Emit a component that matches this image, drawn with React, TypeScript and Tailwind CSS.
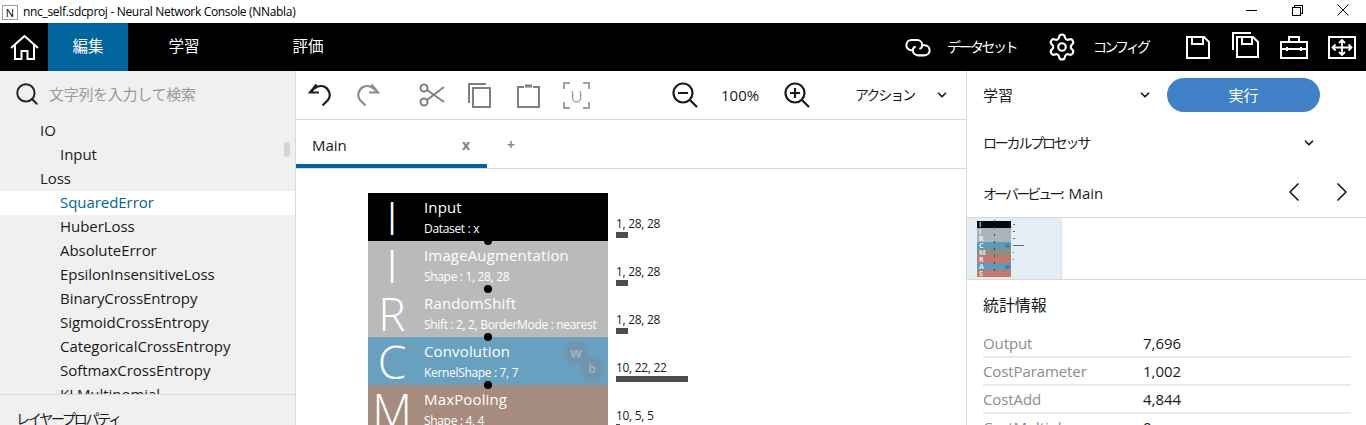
import { ChevronDown, ChevronLeft, ChevronRight, Search, Settings } from "lucide-react";

const FONT = "font-['Open_Sans','Noto_Sans_CJK_JP',sans-serif]";

const treeItems = [
  { label: "IO", depth: 0 },
  { label: "Input", depth: 1 },
  { label: "Loss", depth: 0 },
  { label: "SquaredError", depth: 1, active: true },
  { label: "HuberLoss", depth: 1 },
  { label: "AbsoluteError", depth: 1 },
  { label: "EpsilonInsensitiveLoss", depth: 1 },
  { label: "BinaryCrossEntropy", depth: 1 },
  { label: "SigmoidCrossEntropy", depth: 1 },
  { label: "CategoricalCrossEntropy", depth: 1 },
  { label: "SoftmaxCrossEntropy", depth: 1 },
  { label: "KLMultinomial", depth: 1 },
];

const layers = [
  { letter: "I", name: "Input", sub: "Dataset : x", bg: "bg-black", shape: "1, 28, 28", bar: "w-3" },
  { letter: "I", name: "ImageAugmentation", sub: "Shape : 1, 28, 28", bg: "bg-[#bababa]", shape: "1, 28, 28", bar: "w-3" },
  { letter: "R", name: "RandomShift", sub: "Shift : 2, 2, BorderMode : nearest", bg: "bg-[#bababa]", shape: "1, 28, 28", bar: "w-3" },
  { letter: "C", name: "Convolution", sub: "KernelShape : 7, 7", bg: "bg-[#68a0bf]", shape: "10, 22, 22", bar: "w-[72px]", weights: true },
  { letter: "M", name: "MaxPooling", sub: "Shape : 4, 4", bg: "bg-[#a58c7e]", shape: "10, 5, 5", bar: "w-1" },
];

const thumbRows = [
  { letter: "I", bg: "bg-[#05090d]", bar: "w-[2px]" },
  { letter: "I", bg: "bg-[#abb4bb]", bar: "w-[2px]" },
  { letter: "R", bg: "bg-[#abb4bb]", bar: "w-[2px]" },
  { letter: "C", bg: "bg-[#5b9cbd]", bar: "w-[11px]", weights: true },
  { letter: "M", bg: "bg-[#948a80]", bar: "w-px" },
  { letter: "R", bg: "bg-[#c6766b]", bar: "w-px" },
  { letter: "A", bg: "bg-[#5b9cbd]", bar: "w-0", weights: true },
  { letter: "S", bg: "bg-[#c6766b]", bar: "w-0" },
];

const stats = [
  { label: "Output", value: "7,696" },
  { label: "CostParameter", value: "1,002" },
  { label: "CostAdd", value: "4,844" },
  { label: "CostMultiply", value: "0" },
];

function HomeIcon() {
  return (
    <svg width="29" height="25" viewBox="0 0 29 25" fill="none" stroke="white" strokeWidth="2">
      <path d="M1 13 14.500 1 28 13M5 10v14h6.500v-8h6v8H24V10" />
    </svg>
  );
}

function LinkIcon() {
  return (
    <svg width="26" height="19" viewBox="0 0 28 20" fill="none" stroke="white" strokeWidth="2.200">
      <path d="M9 13H7A5.500 5.500 0 0 1 7 2h6a5.500 5.500 0 0 1 5.500 5.500c0 2-1.500 3.500-3 4" />
      <path d="M18.500 7.500H21a5.500 5.500 0 0 1 0 11h-7A5.500 5.500 0 0 1 8.500 13c0-2 1.500-3.500 3-4" />
    </svg>
  );
}

function SaveIcon() {
  return (
    <svg width="24" height="23" viewBox="0 0 24 23" fill="none" stroke="white" strokeWidth="2">
      <path d="M1 1h17l5 5v16H1z" />
      <path d="M6 1v7h11V1" />
    </svg>
  );
}

function SaveAsIcon() {
  return (
    <svg width="27" height="26" viewBox="0 0 27 26" fill="none" stroke="white" strokeWidth="2">
      <path d="M1 18V1h18" />
      <path d="M5 5h16l5 5v15H5z" />
      <path d="M10 5v7h10V5" />
    </svg>
  );
}

function ToolboxIcon() {
  return (
    <svg width="28" height="24" viewBox="0 0 28 24" fill="none" stroke="white" strokeWidth="2">
      <path d="M1 7h26v16H1zM9 7V2h10v5M1 14h26" />
      <path d="M7 12v4M21 12v4" />
    </svg>
  );
}

function FitIcon() {
  return (
    <svg width="28" height="23" viewBox="0 0 28 23" fill="none" stroke="white" strokeWidth="1.800">
      <path d="M1 1h26v21H1z" strokeWidth="2" />
      <path d="M5 11.500h18M14 4v15M7.500 8.500l-3 3 3 3M20.500 8.500l3 3-3 3M11 7l3-3 3 3M11 16l3 3 3-3" />
    </svg>
  );
}

function UndoIcon({ stroke, flip }: { stroke: string; flip?: boolean }) {
  return (
    <svg width="24" height="24" viewBox="0 0 24 24" fill="none" stroke={stroke} strokeWidth="2.200" className={flip ? "-scale-x-100" : ""}>
      <path d="M8.500 1.500 2 9.500h9M3 9.500C6 4 12 1.500 17 4c5 3 6 9 3 13l-5.500 5.500" />
    </svg>
  );
}

function ScissorsIcon() {
  return (
    <svg width="26" height="24" viewBox="0 0 26 24" fill="none" stroke="#808080" strokeWidth="2">
      <circle cx="5" cy="5" r="3.500" />
      <circle cx="5" cy="19" r="3.500" />
      <path d="M8 7 25 19M8 17 25 4" />
    </svg>
  );
}

function CopyIcon() {
  return (
    <svg width="23" height="25" viewBox="0 0 23 25" fill="none" stroke="#808080" strokeWidth="2">
      <path d="M1 20V1h17" />
      <path d="M5 5h17v19H5z" />
    </svg>
  );
}

function PasteIcon() {
  return (
    <svg width="23" height="25" viewBox="0 0 23 25" fill="none" stroke="#808080" strokeWidth="2">
      <path d="M7 4H1v20h21V4h-6" />
      <path d="M8 1.500h7v3H8z" fill="#808080" stroke="none" />
    </svg>
  );
}

function UngroupIcon() {
  return (
    <svg width="27" height="27" viewBox="0 0 27 27" fill="none" stroke="#a0a0a0" strokeWidth="2">
      <path d="M7 1H1v6M20 1h6v6M7 26H1v-6M20 26h6v-6" />
      <path d="M9.500 9v7a4 4 0 0 0 8 0V9" strokeWidth="1.400" />
    </svg>
  );
}

function ZoomIcon({ plus }: { plus?: boolean }) {
  return (
    <svg width="26" height="26" viewBox="0 0 26 26" fill="none" stroke="#1a1a1a" strokeWidth="2.200">
      <circle cx="11" cy="11" r="9.500" />
      <path d="m18 18 7 7M6 11h10" />
      {plus && <path d="M11 6v10" />}
    </svg>
  );
}

function WindowButtons() {
  return (
    <div className="ml-auto flex items-center pb-[3px]">
      <div className="flex w-[46px] justify-center">
        <svg width="11" height="11" viewBox="0 0 11 11" stroke="black" shapeRendering="crispEdges"><path d="M0 5.500h11" /></svg>
      </div>
      <div className="flex w-[46px] justify-center">
        <svg width="11" height="11" viewBox="0 0 11 11" fill="none" stroke="black" shapeRendering="crispEdges"><path d="M.5 2.500h8v8h-8zM2.500 2.500v-2h8v8h-2" /></svg>
      </div>
      <div className="flex w-[46px] justify-center">
        <svg width="12" height="12" viewBox="0 0 12 12" stroke="black" strokeWidth="1"><path d="m.5.500 11 11M11.500.500l-11 11" /></svg>
      </div>
    </div>
  );
}

function TitleBar() {
  return (
    <div className="flex h-[23px] items-center bg-white">
      <div className="ml-[2px] mt-[2px] flex h-[15px] w-4 items-center justify-center border border-[#9a9a9a] text-[11px] leading-none text-black">N</div>
      <span className="ml-[5px] mt-[1px] text-xs tracking-[-0.32px] text-black">nnc_self.sdcproj - Neural Network Console (NNabla)</span>
      <WindowButtons />
    </div>
  );
}

function NavBar() {
  return (
    <div className="flex h-12 items-center bg-black text-white">
      <div className="flex w-12 justify-center"><HomeIcon /></div>
      <div className="flex h-12 w-20 items-center justify-center bg-[#00659c] text-[15.5px]">編集</div>
      <div className="flex w-[112px] justify-center text-[15.5px]">学習</div>
      <div className="flex w-[136px] justify-center text-[15.5px]">評価</div>
      <div className="ml-auto flex items-center">
        <LinkIcon />
        <span className="ml-[16px] w-[75px] whitespace-nowrap text-sm tracking-[-2.500px]">データセット</span>
        <Settings size={30} strokeWidth={1.700} className="ml-[25px]" />
        <span className="ml-[16px] w-[73px] whitespace-nowrap text-sm tracking-[-2.800px]">コンフィグ</span>
        <span className="ml-[20px]"><SaveIcon /></span>
        <span className="ml-[22px] -mt-1"><SaveAsIcon /></span>
        <span className="ml-[21px]"><ToolboxIcon /></span>
        <span className="ml-[20px] mr-[10px]"><FitIcon /></span>
      </div>
    </div>
  );
}

function Sidebar() {
  return (
    <div className="flex w-[296px] shrink-0 flex-col border-r border-[#d9d9d9] bg-[#f0f0f0]">
      <div className="flex h-12 shrink-0 items-center pb-[2px] pl-[14px] text-[15px] text-[#999999]">
        <Search size={26} strokeWidth={1.800} className="text-[#222222]" />
        <span className="ml-[9px] tracking-[-0.3px]">文字列を入力して検索</span>
      </div>
      <div className="relative h-[275px] shrink-0 overflow-hidden">
        {treeItems.map((item) => (
          <div
            key={item.label}
            className={`flex h-6 items-center pb-[2px] text-[15px] tracking-[-0.05px] ${item.depth ? "pl-[60px]" : "pl-10"} ${
              item.active ? "bg-white text-[#00659c]" : "text-[#1a1a1a]"
            }`}
          >
            {item.label}
          </div>
        ))}
        <div className="absolute right-[5px] top-[23px] h-[15px] w-[6px] rounded-full bg-[#d4d4d4]" />
      </div>
      <div className="flex h-10 items-start border-t border-[#d9d9d9] pl-4 pt-[14px] text-sm text-[#1a1a1a]">
        <span className="whitespace-nowrap tracking-[-2.200px]">レイヤープロパティ</span>
      </div>
    </div>
  );
}

function Toolbar() {
  return (
    <div className="flex h-[49px] shrink-0 items-center border-b border-[#d9d9d9] pl-3">
      <UndoIcon stroke="#1f1f1f" />
      <span className="ml-[24px]"><UndoIcon stroke="#8c8c8c" flip /></span>
      <span className="ml-[39px]"><ScissorsIcon /></span>
      <span className="ml-[23px]"><CopyIcon /></span>
      <span className="ml-[26px]"><PasteIcon /></span>
      <span className="ml-[23px]"><UngroupIcon /></span>
      <span className="ml-[82px]"><ZoomIcon /></span>
      <span className="ml-[23px] w-[39px] text-[15px] text-[#1a1a1a]">100%</span>
      <span className="ml-[24px]"><ZoomIcon plus /></span>
      <span className="ml-[45px] w-[61px] whitespace-nowrap text-sm tracking-[-2px] text-[#1a1a1a]">アクション</span>
      <ChevronDown size={14} strokeWidth={3} className="ml-[19px] text-[#1a1a1a]" />
    </div>
  );
}

function Tabs() {
  return (
    <div className="flex h-[49px] shrink-0 border-b border-[#d9d9d9]">
      <div className="flex w-[191px] items-center justify-between border-b-4 border-[#00659c] pl-4 pr-[17px] pt-[6px] text-[15px] text-[#1a1a1a]">
        <span>Main</span>
        <span className="text-sm font-bold text-[#808080]">x</span>
      </div>
      <div className="ml-5 flex items-center pt-[2px] text-sm font-bold text-[#8c8c8c]">+</div>
    </div>
  );
}

function LayerNode({ layer, first }: { layer: (typeof layers)[number]; first: boolean }) {
  return (
    <div className="flex">
      <div className={`relative flex h-12 w-60 items-center ${layer.bg} text-white`}>
        <div className="flex w-12 justify-center text-[46px] font-[350] leading-none">{layer.letter}</div>
        <div className="ml-2 flex flex-col whitespace-nowrap">
          <span className="text-[15px] leading-[22px] tracking-[0.15px]">{layer.name}</span>
          <span className="mt-[2px] text-xs leading-[18px] tracking-[-0.33px]">{layer.sub}</span>
        </div>
        {!first && <div className="absolute -top-1 left-[116px] z-10 h-2 w-2 rounded-full bg-black" />}
        {layer.weights && (
          <>
            <div className="absolute right-[20px] top-[4px] flex h-6 w-6 items-center justify-center rounded-full bg-[#7394ae] text-sm font-bold text-[#96b4c9]">w</div>
            <div className="absolute right-1 top-5 flex h-6 w-6 items-center justify-center rounded-full bg-[#7394ae] text-xs font-bold text-[#96b4c9]">b</div>
          </>
        )}
      </div>
      <div className="ml-2 flex flex-col justify-end pb-[3px]">
        <span className="text-xs leading-[16px] tracking-[-0.3px] text-[#1a1a1a]">{layer.shape}</span>
        <div className={`h-[6px] ${layer.bar} bg-[#4d4d4d]`} />
      </div>
    </div>
  );
}

function Canvas() {
  return (
    <div className="flex-1 overflow-hidden pl-[72px] pt-6">
      {layers.map((layer, i) => (
        <LayerNode key={layer.name} layer={layer} first={i === 0} />
      ))}
    </div>
  );
}

function Thumbnail() {
  return (
    <div className="flex h-full w-[95px] flex-col border-r border-[#d5e2ea] bg-[#e4eef5] pl-[10px] pt-[3px]">
      {thumbRows.map((row, i) => (
        <div key={i} className="flex items-center">
          <div className={`relative flex h-[7px] w-[34px] items-center pl-[2px] text-[7px] font-bold leading-none text-white/80 ${row.bg}`}>
            {row.letter}
            <div className="absolute -top-px left-[17px] h-[2px] w-px bg-[#444444]" />
            {row.weights && <div className="absolute right-px top-[2px] h-[4px] w-[5px] rounded-full bg-[#4a7f9e]" />}
          </div>
          <div className={`ml-[2px] h-px ${row.bar} bg-[#666666]`} />
        </div>
      ))}
    </div>
  );
}

function RightPanel() {
  return (
    <div className="flex w-[400px] shrink-0 flex-col border-l border-[#d9d9d9] text-[#1a1a1a]">
      <div className="flex h-12 shrink-0 items-center pl-4 text-[15px]">
        <span className="w-[155px]">学習</span>
        <ChevronDown size={14} strokeWidth={3} />
        <div className="ml-[15px] flex h-[34px] w-[153px] items-center justify-center rounded-full bg-[#3f80c8] text-[15px] text-white">実行</div>
      </div>
      <div className="flex h-12 shrink-0 items-center pl-4 text-sm">
        <span className="w-[319px] tracking-[-2.200px]">ローカルプロセッサ</span>
        <ChevronDown size={14} strokeWidth={3} />
      </div>
      <div className="flex h-[51px] shrink-0 items-center border-b border-[#d9d9d9] pl-4 text-[15px]">
        <span className="w-[295px] pt-[2px]"><span className="text-sm tracking-[-2.900px]">オーバービュー</span>: Main</span>
        <ChevronLeft size={32} strokeWidth={1.300} />
        <ChevronRight size={32} strokeWidth={1.300} className="ml-4" />
      </div>
      <div className="h-[62px] shrink-0 border-b border-[#d9d9d9]">
        <Thumbnail />
      </div>
      <div className="px-4 pt-[13px] text-[15px]">
        <div className="pb-[13px] text-base tracking-[-0.1px]">統計情報</div>
        {stats.map((stat) => (
          <div key={stat.label} className="mr-[-1px] flex h-7 items-center border-b-2 border-[#e8e8e8]">
            <span className="w-[160px] tracking-[-0.1px] text-[#8c8c8c]">{stat.label}</span>
            <span>{stat.value}</span>
          </div>
        ))}
      </div>
    </div>
  );
}

export default function App() {
  return (
    <div className={`flex h-[425px] w-[1366px] flex-col overflow-hidden bg-white ${FONT}`}>
      <TitleBar />
      <NavBar />
      <div className="flex min-h-0 flex-1">
        <Sidebar />
        <div className="flex min-w-0 flex-1 flex-col">
          <Toolbar />
          <Tabs />
          <Canvas />
        </div>
        <RightPanel />
      </div>
    </div>
  );
}
